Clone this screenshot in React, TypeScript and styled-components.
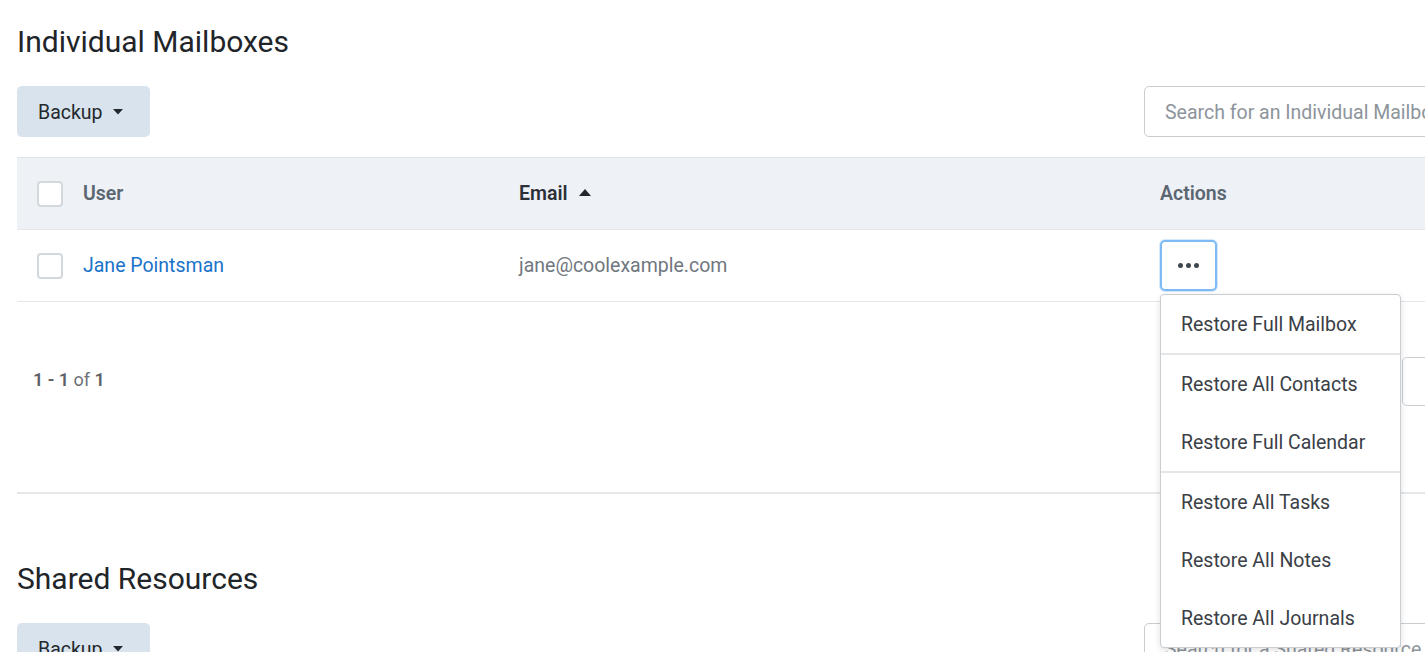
import React from 'react';
import styled, { createGlobalStyle } from 'styled-components';

const GlobalStyle = createGlobalStyle`
  html, body {
    margin: 0;
    padding: 0;
    background: #fff;
    overflow: hidden;
    font-family: Roboto, "Liberation Sans", sans-serif;
  }
`;

type Column = { label: string; sorted?: boolean };

const columns: Column[] = [
  { label: 'User' },
  { label: 'Email', sorted: true },
  { label: 'Actions' },
];

const menuGroups: string[][] = [
  ['Restore Full Mailbox'],
  ['Restore All Contacts', 'Restore Full Calendar'],
  ['Restore All Tasks', 'Restore All Notes', 'Restore All Journals'],
];

const Caret = () => (
  <svg width="10" height="6" viewBox="0 0 10 6">
    <path d="M0 0 L10 0 L5 5.5 Z" fill="currentColor" />
  </svg>
);

const ActionsMenu: React.FC = () => (
  <Menu>
    {menuGroups.map((group, gi) => (
      <MenuGroup key={gi} $thick={gi === 1}>
        {group.map((item) => (
          <MenuItem key={item}>{item}</MenuItem>
        ))}
      </MenuGroup>
    ))}
  </Menu>
);

type SectionProps = {
  title: string;
  placeholder: string;
  withTable?: boolean;
};

const Section: React.FC<SectionProps> = ({ title, placeholder, withTable }) => (
  <SectionWrapper>
    <Title>{title}</Title>
    <Toolbar>
      <BackupButton>
        Backup
        <Caret />
      </BackupButton>
      <SearchInput placeholder={placeholder} />
    </Toolbar>
    {withTable && (
      <>
        <Table>
          <HeaderRow>
            {columns.map((c, i) => (
              <HeaderCell key={c.label} $dark={c.sorted}>
                {i === 0 && <Checkbox />}
                {c.label}
                {c.sorted && (
                  <SortIcon viewBox="0 0 12 7" width="12" height="7">
                    <path d="M0 7 L12 7 L6 0 Z" fill="currentColor" />
                  </SortIcon>
                )}
              </HeaderCell>
            ))}
          </HeaderRow>
          <DataRow>
            <Cell>
              <Checkbox />
              <UserLink>Jane Pointsman</UserLink>
            </Cell>
            <Cell>
              <EmailText>jane@coolexample.com</EmailText>
            </Cell>
            <Cell>
              <ActionsWrap>
                <DotsButton>
                  <Dot />
                  <Dot />
                  <Dot />
                </DotsButton>
                <ActionsMenu />
              </ActionsWrap>
            </Cell>
          </DataRow>
        </Table>
        <Pagination>
          <Count>
            <b>1 - 1</b> of <b>1</b>
          </Count>
          <PageBox />
        </Pagination>
      </>
    )}
  </SectionWrapper>
);

export default function App() {
  return (
    <>
      <GlobalStyle />
      <Page>
        <Section
          title="Individual Mailboxes"
          placeholder="Search for an Individual Mailbox"
          withTable
        />
        <Section title="Shared Resources" placeholder="Search for a Shared Resource" />
      </Page>
    </>
  );
}

const Page = styled.div`
  width: 1620px;
  padding: 0 0 0 17px;
`;

const SectionWrapper = styled.section`
  display: flex;
  flex-direction: column;
  &:first-child {
    padding-bottom: 86px;
    border-bottom: 2px solid #e6e7e8;
  }
  &:first-child + & {
    padding-top: 43px;
  }
`;

const Title = styled.h2`
  margin: 24px 0 0;
  font-size: 30px;
  font-weight: 400;
  line-height: 36px;
  color: #212529;
`;

const Toolbar = styled.div`
  display: flex;
  justify-content: space-between;
  align-items: center;
  margin-top: 26px;
`;

const BackupButton = styled.button`
  all: unset;
  box-sizing: border-box;
  display: flex;
  align-items: center;
  gap: 10px;
  height: 51px;
  width: 133px;
  padding: 1px 21px 0;
  background: #d8e3ee;
  border-radius: 5px;
  font-size: 19.5px;
  color: #23282d;
  cursor: pointer;
`;

const SearchInput = styled.input`
  box-sizing: border-box;
  width: 493px;
  height: 51px;
  border: 1px solid #c9cdd1;
  border-radius: 5px;
  padding: 1px 20px 0;
  font-family: Roboto, "Liberation Sans", sans-serif;
  font-size: 19.5px;
  color: #212529;
  &::placeholder {
    color: #8d949b;
  }
`;

const Table = styled.div`
  margin-top: 20px;
  border-top: 1px solid #dfe3e8;
`;

const Row = styled.div`
  display: grid;
  grid-template-columns: 482px 641px 1fr;
  height: 71px;
  border-bottom: 1px solid #e4e6e9;
`;

const HeaderRow = styled(Row)`
  background: #eef1f6;
`;

const DataRow = styled(Row)`
  background: #fff;
`;

const Cell = styled.div`
  display: flex;
  align-items: center;
  gap: 20px;
  padding-left: 20px;
  font-size: 19.5px;
`;

const HeaderCell = styled(Cell)<{ $dark?: boolean }>`
  font-weight: 600;
  color: ${(p) => (p.$dark ? '#2b3036' : '#5b6671')};
  gap: ${(p) => (p.$dark ? '11px' : '20px')};
`;

const SortIcon = styled.svg`
  color: #23282d;
  margin-top: -2px;
`;

const Checkbox = styled.span`
  box-sizing: border-box;
  width: 26px;
  height: 26px;
  border: 2px solid #d3d8dc;
  border-radius: 4px;
  background: #fff;
  flex-shrink: 0;
`;

const UserLink = styled.a`
  color: #1a73c9;
  text-decoration: none;
  cursor: pointer;
`;

const EmailText = styled.span`
  color: #70777e;
`;

const ActionsWrap = styled.div`
  position: relative;
  display: flex;
`;

const DotsButton = styled.button`
  all: unset;
  box-sizing: border-box;
  width: 57px;
  height: 51px;
  border: 2px solid #7dbaf6;
  border-radius: 5px;
  display: flex;
  align-items: center;
  justify-content: center;
  gap: 3px;
  background: #fff;
  box-shadow: 0 0 0 1px #d6e9fc;
`;

const Dot = styled.span`
  width: 5px;
  height: 5px;
  border-radius: 50%;
  background: #3e4750;
`;

const Menu = styled.div`
  position: absolute;
  top: 54px;
  left: 0;
  z-index: 10;
  width: 239px;
  background: #fff;
  border: 1px solid #c9ced3;
  border-radius: 4px;
  box-shadow: 0 2px 6px rgba(0, 0, 0, 0.12);
  display: flex;
  flex-direction: column;
`;

const MenuGroup = styled.div<{ $thick?: boolean }>`
  display: flex;
  flex-direction: column;
  & + & {
    border-top: ${(p) => (p.$thick ? '2px' : '1px')} solid #e3e5e7;
  }
`;

const MenuItem = styled.div`
  height: 58px;
  display: flex;
  align-items: center;
  padding-left: 20px;
  font-size: 19.5px;
  color: #3a4046;
`;

const Pagination = styled.div`
  display: flex;
  justify-content: space-between;
  align-items: center;
  padding: 55px 0 0 16px;
`;

const Count = styled.div`
  font-size: 18px;
  color: #6c7176;
  white-space: nowrap;
  margin-top: -4px;
  b {
    font-weight: 600;
    color: #5d6166;
  }
`;

const PageBox = styled.div`
  box-sizing: border-box;
  width: 235px;
  height: 49px;
  border: 1px solid #ccd0d4;
  border-radius: 5px;
  flex-shrink: 0;
`;
